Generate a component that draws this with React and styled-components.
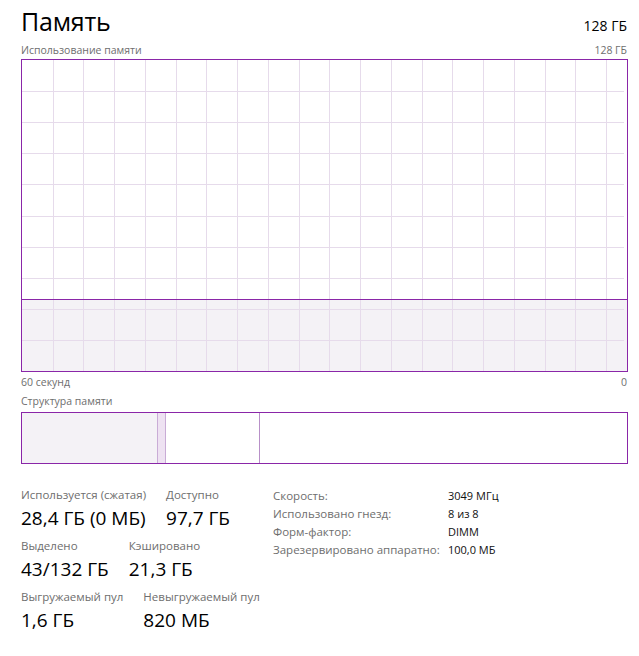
import React from "react";
import styled, { createGlobalStyle } from "styled-components";

const GlobalStyle = createGlobalStyle`
  html, body {
    margin: 0;
    padding: 0;
    background: #fff;
  }
  body {
    font-family: "Open Sans", "Noto Sans", sans-serif;
    color: #000;
  }
`;

const PURPLE = "#8a26a8";
const GRID = "#e6dbeb";
const FILL = "#f4f2f6";

const Page = styled.div`
  width: 639px;
  box-sizing: border-box;
  padding: 4px 12px 0 21px;
`;

const Header = styled.div`
  display: flex;
  justify-content: space-between;
  align-items: baseline;
  height: 38px;
`;

const Title = styled.div`
  font-size: 25px;
  line-height: 34px;
  letter-spacing: -0.2px;
`;

const Total = styled.div`
  font-size: 14px;
`;

const Caption = styled.div`
  display: flex;
  justify-content: space-between;
  font-size: 10.5px;
  line-height: 17px;
  color: #6e6e6e;
  margin-top: ${({ $mt }) => $mt || 0}px;
  margin-bottom: ${({ $mb }) => $mb || 0}px;
`;

const ChartBox = styled.div`
  box-sizing: border-box;
  width: 607px;
  height: 313px;
  border: 1px solid ${PURPLE};
  svg {
    display: block;
  }
`;

const BarBox = styled.div`
  box-sizing: border-box;
  width: 607px;
  height: 52px;
  border: 1px solid ${PURPLE};
  display: flex;
`;

const Segment = styled.div`
  flex: ${({ $w }) => ($w ? `0 0 ${$w}px` : "1 1 auto")};
  background: ${({ $bg }) => $bg || "#fff"};
  border-right: ${({ $line }) => ($line ? `1px solid ${$line}` : "none")};
`;

const Stats = styled.div`
  display: flex;
  margin-top: 23px;
`;

const LeftStats = styled.div`
  width: 252px;
  display: flex;
  flex-direction: column;
  gap: 4px;
`;

const StatRow = styled.div`
  display: flex;
  gap: 20px;
`;

const Stat = styled.div`
  display: flex;
  flex-direction: column;
`;

const Label = styled.div`
  font-size: 11.5px;
  line-height: 16px;
  color: #6e6e6e;
  white-space: nowrap;
`;

const Value = styled.div`
  font-size: 19px;
  line-height: 31px;
  white-space: nowrap;
`;

const Props = styled.div`
  display: grid;
  grid-template-columns: 175px auto;
  grid-auto-rows: 18px;
  align-items: center;
  font-size: 11.5px;
  margin-top: -1px;
`;

const PropName = styled.div`
  color: #6e6e6e;
  white-space: nowrap;
`;

const PropValue = styled.div`
  color: #111;
  font-size: 11px;
  white-space: nowrap;
`;

const W = 605;
const H = 311;

const UsageChart = () => {
  const cols = Array.from({ length: 19 }, (_, k) => 30.5 + 30.75 * k);
  const rows = Array.from({ length: 9 }, (_, k) => (H / 10) * (k + 1));
  const fillTop = 239;
  return (
    <ChartBox>
      <svg width={W} height={H} viewBox={`0 0 ${W} ${H}`}>
        <rect x="0" y={fillTop} width={W} height={H - fillTop} fill={FILL} />
        {cols.map(x => (
          <line key={"c" + x} x1={Math.round(x) + 0.5} x2={Math.round(x) + 0.5} y1="0" y2={H} stroke={GRID} strokeWidth="1" />
        ))}
        {rows.map(y => (
          <line key={"r" + y} x1="0" x2={W - 3} y1={Math.round(y) + 0.5} y2={Math.round(y) + 0.5} stroke={GRID} strokeWidth="1" />
        ))}
        <line x1="0" x2={W} y1={fillTop + 0.5} y2={fillTop + 0.5} stroke={PURPLE} strokeWidth="1" />
      </svg>
    </ChartBox>
  );
};

const rows = [
  [
    { label: "Используется (сжатая)", value: "28,4 ГБ (0 МБ)" },
    { label: "Доступно", value: "97,7 ГБ" }
  ],
  [
    { label: "Выделено", value: "43/132 ГБ" },
    { label: "Кэшировано", value: "21,3 ГБ" }
  ],
  [
    { label: "Выгружаемый пул", value: "1,6 ГБ" },
    { label: "Невыгружаемый пул", value: "820 МБ" }
  ]
];

const props = [
  ["Скорость:", "3049 МГц"],
  ["Использовано гнезд:", "8 из 8"],
  ["Форм-фактор:", "DIMM"],
  ["Зарезервировано аппаратно:", "100,0 МБ"]
];

export default function App() {
  return (
    <>
      <GlobalStyle />
      <Page>
        <Header>
          <Title>Память</Title>
          <Total>128 ГБ</Total>
        </Header>
        <Caption>
          <span>Использование памяти</span>
          <span>128 ГБ</span>
        </Caption>
        <UsageChart />
        <Caption $mt={2}>
          <span>60 секунд</span>
          <span>0</span>
        </Caption>
        <Caption $mt={2} $mb={2}>
          <span>Структура памяти</span>
        </Caption>
        <BarBox>
          <Segment $w={135} $bg={FILL} $line="#c9acd6" />
          <Segment $w={7} $bg="#eee2f2" $line="#c9acd6" />
          <Segment $w={93} $line="#b890c8" />
          <Segment />
        </BarBox>
        <Stats>
          <LeftStats>
            {rows.map((r, i) => (
              <StatRow key={i}>
                {r.map(s => (
                  <Stat key={s.label}>
                    <Label>{s.label}</Label>
                    <Value>{s.value}</Value>
                  </Stat>
                ))}
              </StatRow>
            ))}
          </LeftStats>
          <Props>
            {props.map(([k, v]) => (
              <React.Fragment key={k}>
                <PropName>{k}</PropName>
                <PropValue>{v}</PropValue>
              </React.Fragment>
            ))}
          </Props>
        </Stats>
      </Page>
    </>
  );
}
